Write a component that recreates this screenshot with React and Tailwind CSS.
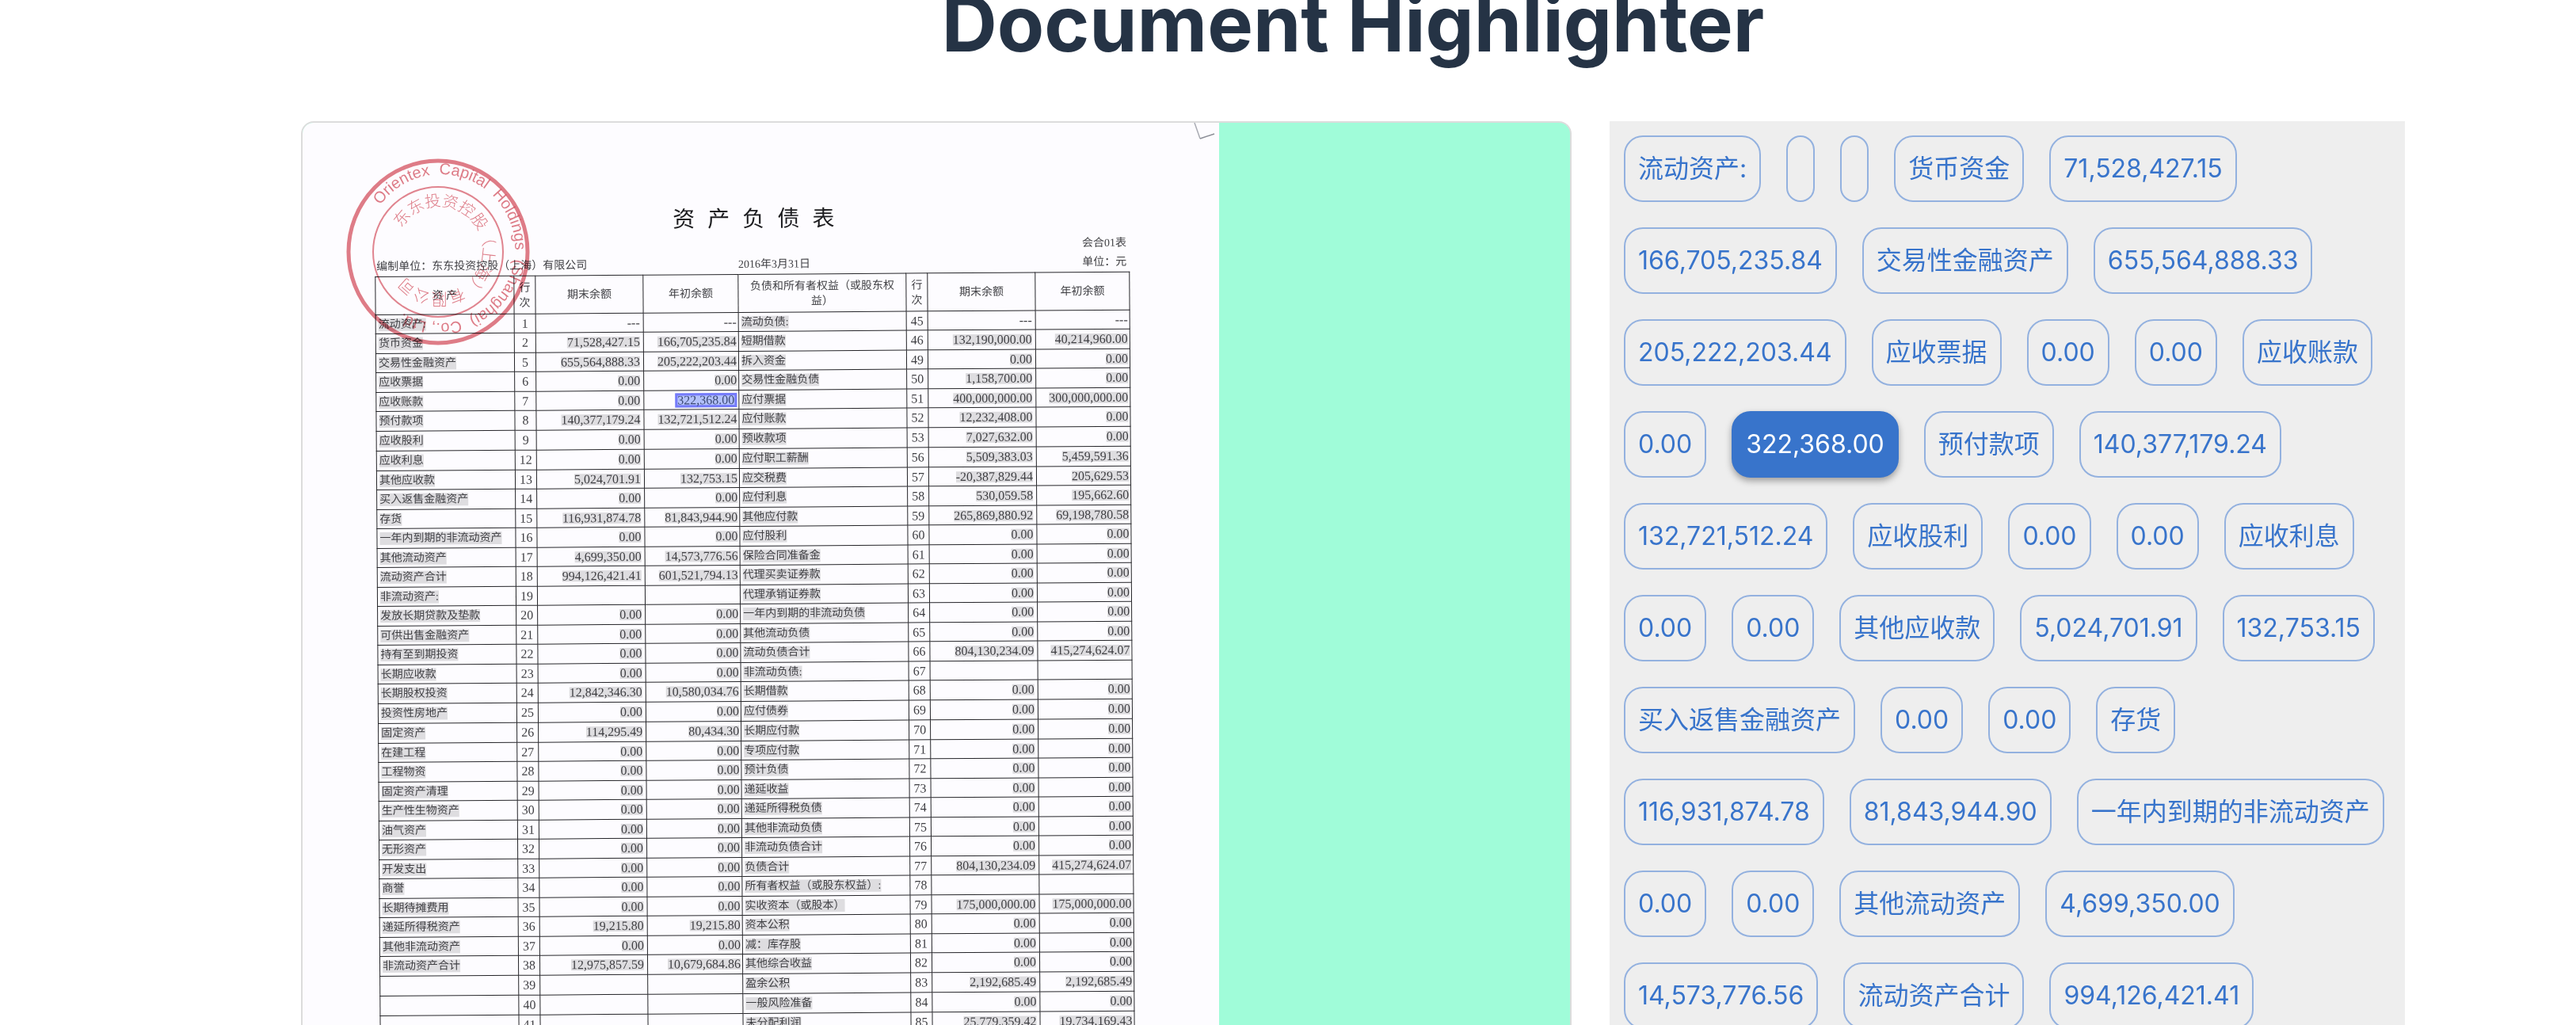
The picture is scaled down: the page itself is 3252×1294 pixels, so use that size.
const chips = [
  '流动资产:', '', '', '货币资金', '71,528,427.15', '166,705,235.84', '交易性金融资产', '655,564,888.33',
  '205,222,203.44', '应收票据', '0.00', '0.00', '应收账款', '0.00', '322,368.00', '预付款项', '140,377,179.24',
  '132,721,512.24', '应收股利', '0.00', '0.00', '应收利息', '0.00', '0.00', '其他应收款', '5,024,701.91', '132,753.15',
  '买入返售金融资产', '0.00', '0.00', '存货', '116,931,874.78', '81,843,944.90', '一年内到期的非流动资产',
  '0.00', '0.00', '其他流动资产', '4,699,350.00', '14,573,776.56', '流动资产合计', '994,126,421.41',
];

const selected = '322,368.00';

const Z = '0.00';
const D = '---';
const rows = [
  ['流动资产:', 1, D, D, '流动负债:', 45, D, D],
  ['货币资金', 2, '71,528,427.15', '166,705,235.84', '短期借款', 46, '132,190,000.00', '40,214,960.00'],
  ['交易性金融资产', 5, '655,564,888.33', '205,222,203.44', '拆入资金', 49, Z, Z],
  ['应收票据', 6, Z, Z, '交易性金融负债', 50, '1,158,700.00', Z],
  ['应收账款', 7, Z, '322,368.00', '应付票据', 51, '400,000,000.00', '300,000,000.00'],
  ['预付款项', 8, '140,377,179.24', '132,721,512.24', '应付账款', 52, '12,232,408.00', Z],
  ['应收股利', 9, Z, Z, '预收款项', 53, '7,027,632.00', Z],
  ['应收利息', 12, Z, Z, '应付职工薪酬', 56, '5,509,383.03', '5,459,591.36'],
  ['其他应收款', 13, '5,024,701.91', '132,753.15', '应交税费', 57, '-20,387,829.44', '205,629.53'],
  ['买入返售金融资产', 14, Z, Z, '应付利息', 58, '530,059.58', '195,662.60'],
  ['存货', 15, '116,931,874.78', '81,843,944.90', '其他应付款', 59, '265,869,880.92', '69,198,780.58'],
  ['一年内到期的非流动资产', 16, Z, Z, '应付股利', 60, Z, Z],
  ['其他流动资产', 17, '4,699,350.00', '14,573,776.56', '保险合同准备金', 61, Z, Z],
  ['流动资产合计', 18, '994,126,421.41', '601,521,794.13', '代理买卖证券款', 62, Z, Z],
  ['非流动资产:', 19, '', '', '代理承销证券款', 63, Z, Z],
  ['发放长期贷款及垫款', 20, Z, Z, '一年内到期的非流动负债', 64, Z, Z],
  ['可供出售金融资产', 21, Z, Z, '其他流动负债', 65, Z, Z],
  ['持有至到期投资', 22, Z, Z, '流动负债合计', 66, '804,130,234.09', '415,274,624.07'],
  ['长期应收款', 23, Z, Z, '非流动负债:', 67, '', ''],
  ['长期股权投资', 24, '12,842,346.30', '10,580,034.76', '长期借款', 68, Z, Z],
  ['投资性房地产', 25, Z, Z, '应付债券', 69, Z, Z],
  ['固定资产', 26, '114,295.49', '80,434.30', '长期应付款', 70, Z, Z],
  ['在建工程', 27, Z, Z, '专项应付款', 71, Z, Z],
  ['工程物资', 28, Z, Z, '预计负债', 72, Z, Z],
  ['固定资产清理', 29, Z, Z, '递延收益', 73, Z, Z],
  ['生产性生物资产', 30, Z, Z, '递延所得税负债', 74, Z, Z],
  ['油气资产', 31, Z, Z, '其他非流动负债', 75, Z, Z],
  ['无形资产', 32, Z, Z, '非流动负债合计', 76, Z, Z],
  ['开发支出', 33, Z, Z, '负债合计', 77, '804,130,234.09', '415,274,624.07'],
  ['商誉', 34, Z, Z, '所有者权益（或股东权益）:', 78, '', ''],
  ['长期待摊费用', 35, Z, Z, '实收资本（或股本）', 79, '175,000,000.00', '175,000,000.00'],
  ['递延所得税资产', 36, '19,215.80', '19,215.80', '资本公积', 80, Z, Z],
  ['其他非流动资产', 37, Z, Z, '减：库存股', 81, Z, Z],
  ['非流动资产合计', 38, '12,975,857.59', '10,679,684.86', '其他综合收益', 82, Z, Z],
  ['', 39, '', '', '盈余公积', 83, '2,192,685.49', '2,192,685.49'],
  ['', 40, '', '', '一般风险准备', 84, Z, Z],
  ['', 41, '', '', '未分配利润', 85, '25,779,359.42', '19,734,169.43'],
];

function Seal() {
  return (
    <svg viewBox="0 0 236 236" className="absolute left-[53px] top-[45px] w-[236px] mix-blend-multiply" aria-hidden="true">
      <defs>
        <path id="seal-outer" d="M45 59 A94 94 0 1 1 191 177 A94 94 0 0 1 45 59" />
        <path id="seal-inner" d="M72 88 A55 55 0 1 1 164 148 A55 55 0 0 1 72 88" />
      </defs>
      <g fill="none" stroke="#d5525f">
        <ellipse cx="118" cy="118" rx="113" ry="115" strokeWidth="5" opacity="0.75" />
        <circle cx="118" cy="118" r="82" strokeWidth="2" opacity="0.7" />
      </g>
      <g fill="#d5525f" opacity="0.75">
        <text fontSize="20" fontFamily="Liberation Sans, sans-serif">
          <textPath href="#seal-outer">Orientex&#160; Capital&#160; Holdings&#160; (Shanghai)&#160; Co., Ltd.</textPath>
        </text>
        <text fontSize="20" fontFamily="Noto Sans CJK SC, sans-serif" fontWeight="300">
          <textPath href="#seal-inner">东东投资控股（上海）有限公司</textPath>
        </text>
      </g>
    </svg>
  );
}

function Amount({ value }) {
  if (!value) return null;
  if (value === D) return <span>{value}</span>;
  if (value === selected) {
    return (
      <mark className="inline-block border-3 border-[#757bfa] bg-[#b3c1fb] leading-3 text-[#3d4a75]">{value}</mark>
    );
  }
  return <mark className="inline-block bg-[#dedde0] text-inherit">{value}</mark>;
}

function Half({ label, no, end, start }) {
  return (
    <>
      <td className="border border-[#26262a] px-[3px] text-left whitespace-nowrap">
        {label && <mark className="inline-block bg-[#dedde0] text-inherit">{label}</mark>}
      </td>
      <td className="border border-[#26262a] text-center text-base leading-[14px]">{no}</td>
      <td className="border border-[#26262a] px-1 text-right text-base leading-[14px] whitespace-nowrap"><Amount value={end} /></td>
      <td className="border border-[#26262a] px-[2px] text-right text-base leading-[14px] whitespace-nowrap"><Amount value={start} /></td>
    </>
  );
}

function Sheet() {
  return (
    <article className="relative min-w-0 overflow-hidden bg-[#fdfcff] pr-[114px] pl-[90px] font-[Liberation_Serif,Noto_Sans_CJK_SC,sans-serif] text-sm text-[#3f3f43]">
      <div className="origin-top-left -rotate-[0.38deg] pt-[104px]">
        <h2 className="flex justify-center gap-4 pl-1 text-[28px] leading-[42px] text-[#1c1c1f]">
          {[...'资产负债表'].map((c) => <span key={c}>{c}</span>)}
        </h2>
        <p className="pr-1 text-right leading-6">会合01表</p>
        <div className="grid grid-cols-3 leading-6">
          <span className="pl-[2px] whitespace-nowrap">编制单位：东东投资控股（上海）有限公司</span>
          <span className="pl-[141px]">2016年3月31日</span>
          <span className="pr-1 text-right">单位：元</span>
        </div>
        <table className="w-full table-fixed border-collapse leading-4">
          <colgroup>
            <col className="w-[175px]" /><col className="w-[27px]" /><col className="w-[136px]" /><col className="w-[120px]" />
            <col className="w-[212px]" /><col className="w-[27px]" /><col className="w-[136px]" /><col className="w-[119px]" />
          </colgroup>
          <thead>
            <tr className="h-12 leading-[19px]">
              {['资 产', '行次', '期末余额', '年初余额', '负债和所有者权益（或股东权益）', '行次', '期末余额', '年初余额'].map((h, i) => (
                <th key={i} scope="col" className="border border-[#26262a] px-[6px] font-normal">{h}</th>
              ))}
            </tr>
          </thead>
          <tbody>
            {rows.map((r) => (
              <tr key={r[1]} className="odd:h-6 even:h-[25px] nth-[7n]:h-[25px]">
                <Half label={r[0]} no={r[1]} end={r[2]} start={r[3]} />
                <Half label={r[4]} no={r[5]} end={r[6]} start={r[7]} />
              </tr>
            ))}
          </tbody>
        </table>
      </div>
      <Seal />
      <svg viewBox="0 0 28 22" className="absolute top-0 right-1 w-7" fill="none" aria-hidden="true">
        <path d="M1 0 L8 20" stroke="#a9abb3" strokeWidth="1.5" />
        <path d="M8 20 L26 14" stroke="#8b8d96" strokeWidth="1.5" />
      </svg>
    </article>
  );
}

function Chip({ text }) {
  const active = text === selected;
  return (
    <button
      type="button"
      aria-label={text || 'empty'}
      aria-pressed={active}
      className={
        'h-[84px] rounded-[24px] border-2 px-4 text-[32px] leading-10 ' +
        (active
          ? 'border-[#3874cb] bg-[#3874cb] text-white shadow-[0_4px_8px_rgba(0,0,0,0.35)]'
          : 'border-[#93b1df] text-[#3874cb]')
      }
    >
      {text}
    </button>
  );
}

export default function App() {
  return (
    <main className="flex h-screen flex-col overflow-hidden bg-white pr-[216px] pl-[380px] font-[Inter,Noto_Sans_CJK_SC,sans-serif]">
      <h1 className="mb-[93px] shrink-0 text-center text-[97px] leading-[60px] font-bold text-[#253345]">Document Highlighter</h1>
      <div className="grid min-h-0 flex-1 grid-cols-[401fr_251fr] grid-rows-[minmax(0,1fr)] gap-12">
        <section className="grid grid-cols-[1157fr_443fr] overflow-hidden rounded-t-2xl border-2 border-b-0 border-[#dcdcdc] bg-[#a0fcd9]">
          <Sheet />
        </section>
        <section className="flex flex-wrap content-start gap-8 overflow-hidden bg-[#eeeeee] p-[18px]">
          {chips.map((c, i) => <Chip key={i} text={c} />)}
        </section>
      </div>
    </main>
  );
}
